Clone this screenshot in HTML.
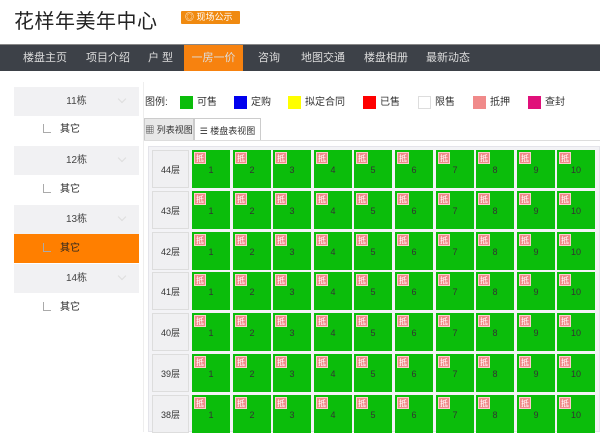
<!DOCTYPE html>
<html><head><meta charset="utf-8"><style>
*{margin:0;padding:0;box-sizing:border-box}
body{width:600px;height:432px;overflow:hidden;background:#fff;font-family:"Liberation Sans","Noto Sans CJK SC",sans-serif;position:relative;font-size:10px;color:#333}
.a{position:absolute}
.title{left:14px;top:5px;font-size:20px;color:#222;letter-spacing:0.5px}
.badge{left:181px;top:11px;width:59px;height:13px;background:#f08a10;color:#fff;font-size:9px;line-height:13px;padding-left:4px;border-radius:1px}
.nav{left:0;top:44px;width:600px;height:27px;background:#3d4148;border-top:1px solid #888}
.nav span{position:absolute;top:0;line-height:26px;color:#ddd;font-size:11px}
.act{background:#f7820f}
.sb{left:14px;width:125px;height:29px;line-height:29px;text-align:center;font-size:10px;color:#444}
.bd{background:#f1f1f3}
.sub{text-align:left;padding-left:46px;color:#222}
.sub:before{content:"";position:absolute;left:29px;top:9px;width:7px;height:8px;border-left:1px solid #aaa;border-bottom:1px solid #aaa}
.chev{position:absolute;right:14px;top:9px;width:6px;height:6px;border-right:1px solid #ddd;border-bottom:1px solid #ddd;transform:rotate(45deg)}
.lg{top:96px;font-size:10px;line-height:13px}
.sw{display:inline-block;width:13px;height:13px;vertical-align:top;margin-right:4px}
.cell{position:absolute;width:38px;height:38px;background:#0bbd0b;color:#333;font-size:9px;text-align:center;line-height:40px}
.cell i{position:absolute;left:2px;top:2px;width:12px;height:12px;background:#f08a8a;color:#fff;font-style:normal;font-size:8px;line-height:12px;border:1px solid #fcc}
.fl{position:absolute;left:152px;width:37px;height:38px;background:#f0f0f2;border:1px solid #ddd;font-size:9px;line-height:38px;text-align:center;color:#333}
</style></head><body>
<div class="a title">花样年美年中心</div>
<div class="a badge">◎ 现场公示</div>
<div class="a nav">
<span style="left:23px">楼盘主页</span><span style="left:86px">项目介绍</span><span style="left:148px">户 型</span>
<span class="act" style="left:184px;width:59px;text-align:center">一房一价</span>
<span style="left:258px">咨询</span><span style="left:301px">地图交通</span><span style="left:364px">楼盘相册</span><span style="left:426px">最新动态</span></div>
<div class="a sb bd" style="top:87px">11栋<div class="chev"></div></div>
<div class="a sb sub" style="top:115px">其它</div>
<div class="a sb bd" style="top:146px">12栋<div class="chev"></div></div>
<div class="a sb sub" style="top:175px">其它</div>
<div class="a sb bd" style="top:205px">13栋<div class="chev"></div></div>
<div class="a sb sub" style="top:234px;background:#ff7f00">其它</div>
<div class="a sb bd" style="top:264px">14栋<div class="chev"></div></div>
<div class="a sb sub" style="top:293px">其它</div>
<div class="a" style="left:143px;top:82px;width:1px;height:350px;background:#eee"></div>
<div class="a lg" style="left:145px">图例:</div>
<div class="a lg" style="left:180px"><span class="sw" style="background:#0bbd0b"></span>可售</div>
<div class="a lg" style="left:234px"><span class="sw" style="background:#0000ee"></span>定购</div>
<div class="a lg" style="left:288px"><span class="sw" style="background:#ffff00"></span>拟定合同</div>
<div class="a lg" style="left:363px"><span class="sw" style="background:#ff0000"></span>已售</div>
<div class="a lg" style="left:418px"><span class="sw" style="border:1px solid #ddd"></span>限售</div>
<div class="a lg" style="left:473px"><span class="sw" style="background:#f08a8a"></span>抵押</div>
<div class="a lg" style="left:528px"><span class="sw" style="background:#e0107a"></span>查封</div>
<div class="a" style="left:144px;top:118px;width:50px;height:23px;background:#e8e8e8;border:1px solid #ccc;font-size:9px;line-height:22px;text-align:center">▦ 列表视图</div>
<div class="a" style="left:194px;top:118px;width:67px;height:23px;background:#fff;border:1px solid #ccc;border-bottom:none;font-size:9px;line-height:24px;text-align:center">☰ 楼盘表视图</div>
<div class="a" style="left:144px;top:140px;width:456px;height:1px;background:#ddd"></div>
<div class="a" style="left:148px;top:146px;width:452px;height:286px;background:#f3f3f6;border:1px solid #e4e4ea"></div>
<div id="g"></div>
<script>
var h='';for(var j=0;j<7;j++){var y=Math.round(150+j*40.8);h+='<div class="fl" style="top:'+y+'px">'+(44-j)+'层</div>';
for(var i=0;i<10;i++){var x=Math.round(192+i*40.6);h+='<div class="cell" style="left:'+x+'px;top:'+y+'px"><i>抵</i>'+(i+1)+'</div>';}}
document.getElementById('g').innerHTML=h;
</script>
</body></html>
